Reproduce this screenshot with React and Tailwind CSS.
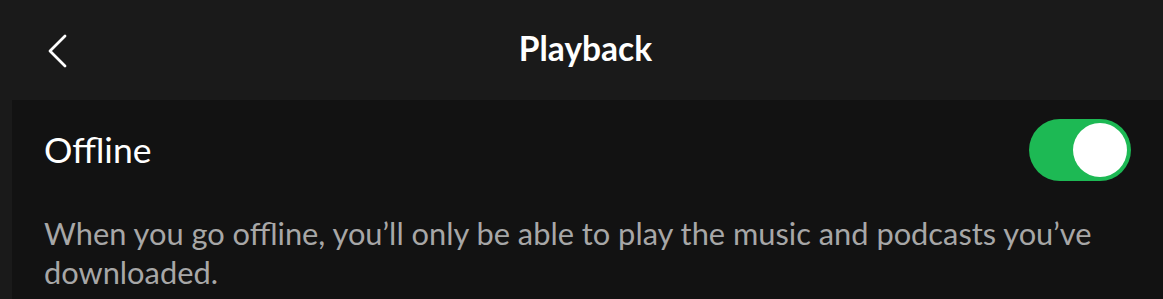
export default function App() {
  return (
    <div className="w-[1163px] h-[299px] overflow-hidden bg-[#1a1a1a] flex flex-col" style={{ fontFamily: "Lato, 'Open Sans', sans-serif" }}>
      <div className="h-[100px] shrink-0 relative flex items-center justify-center">
        <button className="absolute left-[46px] top-[33px] w-[22px] h-[36px] flex items-center justify-center">
          <svg width="22" height="36" viewBox="0 0 22 36" fill="none">
            <path d="M19 3 L4 18 L19 33" stroke="white" strokeWidth="2.8" strokeLinecap="round" strokeLinejoin="round" />
          </svg>
        </button>
        <h1 className="text-white font-bold text-[33.5px] leading-none -mt-[2px] pl-[8px]">Playback</h1>
      </div>
      <div className="ml-[12px] flex-1 bg-[#121212] pl-[32px] pr-[32px]">
        <div className="flex items-center justify-between pt-[19px] h-[81px]">
          <span className="text-white text-[35.5px] leading-none">Offline</span>
          <div className="w-[102px] h-[62px] rounded-full bg-[#1db954] flex items-center justify-end pr-[4px]">
            <div className="w-[54px] h-[54px] rounded-full bg-white" />
          </div>
        </div>
        <p className="mt-[33px] text-[#a7a7a7] text-[30.8px] leading-[39px]">
          When you go offline, you’ll only be able to play the music and podcasts you’ve downloaded.
        </p>
      </div>
    </div>
  );
}
